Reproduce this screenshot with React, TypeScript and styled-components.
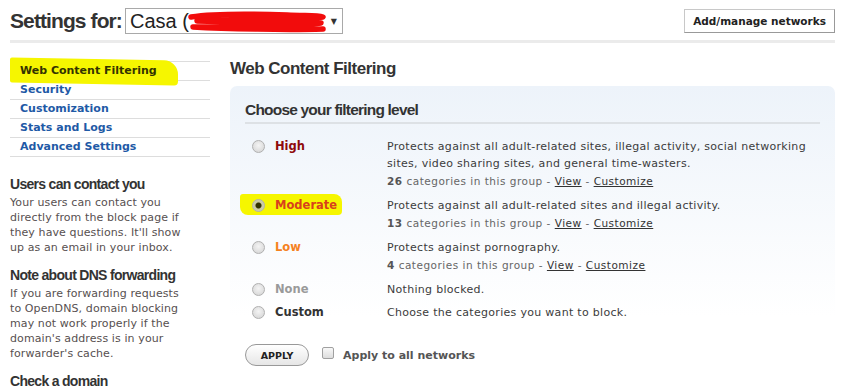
import styled, { createGlobalStyle } from "styled-components";

const GlobalStyle = createGlobalStyle`
  html, body {
    margin: 0;
    padding: 0;
    background: #ffffff;
  }
  body {
    font-family: "DejaVu Sans", Verdana, sans-serif;
    font-size: 11px;
    color: #444444;
  }
  * {
    box-sizing: border-box;
  }
`;

type Level = {
  id: string;
  name: string;
  color: string;
  desc: string[];
  count?: number;
  selected?: boolean;
};

const levels: Level[] = [
  {
    id: "high",
    name: "High",
    color: "#8f0a0a",
    desc: [
      "Protects against all adult-related sites, illegal activity, social networking",
      "sites, video sharing sites, and general time-wasters.",
    ],
    count: 26,
  },
  {
    id: "moderate",
    name: "Moderate",
    color: "#d8401c",
    desc: ["Protects against all adult-related sites and illegal activity."],
    count: 13,
    selected: true,
  },
  {
    id: "low",
    name: "Low",
    color: "#f5821f",
    desc: ["Protects against pornography."],
    count: 4,
  },
  {
    id: "none",
    name: "None",
    color: "#9a9a9a",
    desc: ["Nothing blocked."],
  },
  {
    id: "custom",
    name: "Custom",
    color: "#333333",
    desc: ["Choose the categories you want to block."],
  },
];

const navItems = [
  "Web Content Filtering",
  "Security",
  "Customization",
  "Stats and Logs",
  "Advanced Settings",
];

const notes = [
  {
    title: "Users can contact you",
    lines: [
      "Your users can contact you",
      "directly from the block page if",
      "they have questions. It'll show",
      "up as an email in your inbox.",
    ],
  },
  {
    title: "Note about DNS forwarding",
    lines: [
      "If you are forwarding requests",
      "to OpenDNS, domain blocking",
      "may not work properly if the",
      "domain's address is in your",
      "forwarder's cache.",
    ],
  },
  { title: "Check a domain", lines: [] },
];

export default function App() {
  return (
    <>
      <GlobalStyle />
      <Page>
        <Header>
          <Title>Settings for:</Title>
          <NetworkSelect>
            <SelectText>Casa (</SelectText>
            <Scribble viewBox="0 0 140 24" width="140" height="24">
              <path
                d="M4 7 C30 3, 70 4, 100 5 C118 6, 130 5, 136 7 C110 10, 60 9, 10 11 C50 12, 100 12, 134 13 C110 16, 60 16, 6 17 C40 19, 100 20, 136 19"
                fill="none"
                stroke="#f20c0c"
                strokeWidth="5.5"
                strokeLinecap="round"
                strokeLinejoin="round"
              />
            </Scribble>
            <Arrow>▼</Arrow>
          </NetworkSelect>
          <ManageButton>Add/manage networks</ManageButton>
        </Header>
        <Divider />
        <Columns>
          <Sidebar>
            <Nav>
              {navItems.map((item, i) => (
                <NavItem key={item} $active={i === 0}>
                  {item}
                </NavItem>
              ))}
            </Nav>
            {notes.map((note) => (
              <Note key={note.title}>
                <NoteTitle>{note.title}</NoteTitle>
                {note.lines.length > 0 && (
                  <NoteText>
                    {note.lines.map((line) => (
                      <span key={line}>{line}</span>
                    ))}
                  </NoteText>
                )}
              </Note>
            ))}
          </Sidebar>
          <Main>
            <MainTitle>Web Content Filtering</MainTitle>
            <Panel>
              <PanelTitle>Choose your filtering level</PanelTitle>
              <LevelList>
                {levels.map((level) => (
                  <LevelRow key={level.id}>
                    <LabelCell>
                      <Radio $checked={!!level.selected} />
                      <LevelName $color={level.color}>{level.name}</LevelName>
                      {level.selected && <Highlight />}
                    </LabelCell>
                    <DescCell>
                      {level.desc.map((line) => (
                        <DescLine key={line}>{line}</DescLine>
                      ))}
                      {level.count !== undefined && (
                        <Meta>
                          <b>{level.count}</b> categories in this group -{" "}
                          <MetaLink>View</MetaLink> -{" "}
                          <MetaLink>Customize</MetaLink>
                        </Meta>
                      )}
                    </DescCell>
                  </LevelRow>
                ))}
              </LevelList>
              <Actions>
                <ApplyButton>APPLY</ApplyButton>
                <CheckLabel>
                  <Checkbox />
                  Apply to all networks
                </CheckLabel>
              </Actions>
            </Panel>
          </Main>
        </Columns>
      </Page>
    </>
  );
}

const Page = styled.div`
  width: 847px;
  height: 389px;
  overflow: hidden;
  padding: 0 12px 0 10px;
`;

const Header = styled.div`
  display: flex;
  align-items: center;
  height: 40px;
  padding-top: 2px;
`;

const Title = styled.h1`
  margin: 0 3px 0 0;
  font-family: "Liberation Sans", Arial, sans-serif;
  font-size: 21px;
  font-weight: 700;
  letter-spacing: -0.9px;
  color: #333333;
`;

const NetworkSelect = styled.div`
  position: relative;
  display: flex;
  align-items: center;
  width: 218px;
  height: 26px;
  border: 1px solid #a9a9a9;
  padding-left: 4px;
`;

const SelectText = styled.span`
  font-family: "Liberation Sans", Arial, sans-serif;
  font-size: 20px;
  color: #222222;
`;

const Scribble = styled.svg`
  position: absolute;
  left: 61px;
  top: 1px;
`;

const Arrow = styled.span`
  margin-left: auto;
  margin-right: 5px;
  font-size: 8px;
  color: #333333;
`;

const ManageButton = styled.button`
  margin-left: auto;
  height: 24px;
  padding: 0 8px;
  background: #ffffff;
  border: 1px solid #c8c8c8;
  border-right-color: #999999;
  border-bottom-color: #999999;
  font-family: "DejaVu Sans", Verdana, sans-serif;
  font-size: 10.5px;
  font-weight: 700;
  color: #222222;
`;

const Divider = styled.div`
  height: 3px;
  background: #ebebeb;
`;

const Columns = styled.div`
  display: flex;
  gap: 20px;
  margin-top: 18px;
`;

const Sidebar = styled.aside`
  width: 200px;
  flex-shrink: 0;
`;

const Nav = styled.ul`
  list-style: none;
  margin: 0 0 19px;
  padding: 0;
  border-top: 1px solid #dddddd;
`;

const NavItem = styled.li<{ $active: boolean }>`
  position: relative;
  height: 19px;
  line-height: 18px;
  padding-left: 10px;
  border-bottom: 1px solid #dddddd;
  font-weight: 700;
  font-size: 11px;
  color: ${(p) => (p.$active ? "#333300" : "#1f5aa6")};
  z-index: 0;

  ${(p) =>
    p.$active &&
    `
    &::before {
      content: "";
      position: absolute;
      left: 0;
      top: -3px;
      width: 168px;
      height: 25px;
      background: #f6f600;
      border-radius: 2px 14px 4px 2px;
      transform: skewY(1deg);
      z-index: -1;
    }
  `}
`;

const Note = styled.div`
  margin-bottom: 12px;
`;

const NoteTitle = styled.h3`
  margin: 0 0 3px;
  font-family: "Liberation Sans", Arial, sans-serif;
  font-size: 14px;
  font-weight: 700;
  letter-spacing: -0.7px;
  color: #333333;
`;

const NoteText = styled.p`
  display: flex;
  flex-direction: column;
  margin: 0;
  font-size: 11px;
  line-height: 15px;
  letter-spacing: 0.1px;
  color: #575050;
  white-space: nowrap;
`;

const Main = styled.main`
  flex: 1;
`;

const MainTitle = styled.h2`
  margin: 0 0 9px;
  font-family: "Liberation Sans", Arial, sans-serif;
  font-size: 17px;
  font-weight: 700;
  letter-spacing: -0.5px;
  color: #333333;
  line-height: 16px;
`;

const Panel = styled.section`
  border-radius: 7px;
  background: linear-gradient(#edf3fa, #ffffff 230px);
  padding: 15px 15px 0;
`;

const PanelTitle = styled.h3`
  margin: 0;
  padding-bottom: 3px;
  border-bottom: 2px solid #dde1e5;
  font-family: "Liberation Sans", Arial, sans-serif;
  font-size: 15.5px;
  font-weight: 700;
  letter-spacing: -0.8px;
  color: #333333;
`;

const LevelList = styled.div`
  display: flex;
  flex-direction: column;
  gap: 6px;
  padding-top: 14px;
`;

const LevelRow = styled.div`
  display: grid;
  grid-template-columns: 142px 1fr;
`;

const LabelCell = styled.div`
  position: relative;
  display: flex;
  align-items: flex-start;
  gap: 10px;
  padding-left: 7px;
  z-index: 0;
`;

const Highlight = styled.span`
  position: absolute;
  left: -5px;
  top: -3px;
  width: 102px;
  height: 21px;
  background: #f6f600;
  border-radius: 3px 8px 4px 8px;
  z-index: -1;
`;

const Radio = styled.span<{ $checked: boolean }>`
  display: inline-block;
  width: 13px;
  height: 13px;
  margin-top: 2px;
  border-radius: 50%;
  border: 1px solid #b0b0b0;
  background: ${(p) =>
    p.$checked
      ? "radial-gradient(circle, #333300 0 2.5px, #c8c8a0 3.5px, #d8d8b8 100%)"
      : "radial-gradient(circle at 50% 40%, #f4f4f4, #d2d2d2)"};
`;

const LevelName = styled.span<{ $color: string }>`
  font-weight: 700;
  font-size: 11.5px;
  line-height: 17px;
  color: ${(p) => p.$color};
`;

const DescCell = styled.div`
  display: flex;
  flex-direction: column;
`;

const DescLine = styled.div`
  font-size: 11px;
  line-height: 17px;
  letter-spacing: 0.3px;
  color: #3c3c3c;
`;

const Meta = styled.div`
  font-size: 10.5px;
  line-height: 19px;
  letter-spacing: 0.5px;
  color: #666666;

  b {
    color: #555555;
  }
`;

const MetaLink = styled.a`
  color: #333333;
  text-decoration: underline;
`;

const Actions = styled.div`
  display: flex;
  align-items: center;
  gap: 13px;
  padding-top: 23px;
`;

const ApplyButton = styled.button`
  width: 64px;
  height: 22px;
  border-radius: 11px;
  border: 1px solid #999999;
  background: linear-gradient(#ffffff, #e6e6e6);
  font-family: "DejaVu Sans", Verdana, sans-serif;
  font-size: 9.5px;
  font-weight: 700;
  color: #222222;
  padding: 0;
`;

const CheckLabel = styled.label`
  display: flex;
  align-items: center;
  gap: 9px;
  font-weight: 700;
  font-size: 11px;
  color: #555555;
`;

const Checkbox = styled.span`
  width: 12px;
  height: 12px;
  border: 1px solid #a0a0a0;
  border-radius: 2px;
  background: linear-gradient(#f8f8f8, #dddddd);
  margin-top: -4px;
`;
